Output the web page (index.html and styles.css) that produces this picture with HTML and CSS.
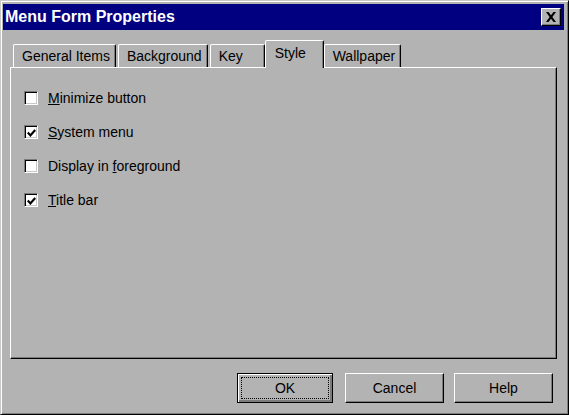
FILE: index.html
```html
<!DOCTYPE html>
<html>
<head>
    <link rel="stylesheet" href="styles.css">
</head>
<body>
    <div class="window">
        <div class="titlebar">
            <span class="title">Menu Form Properties</span>
            <span class="closebtn">
                <svg width="12" height="10" viewBox="0 0 12 10">
                    <path d="M1 0h2.5l2.5 3.2 2.5-3.2h2.5l-3.6 5 3.6 5h-2.5l-2.5-3.2-2.5 3.2h-2.5l3.6-5z" fill="#000"/>
                </svg>
            </span>
        </div>

        <div class="tabs">
            <span class="tab">General Items</span>
            <span class="tab">Background</span>
            <span class="tab">Key</span>
            <span class="tab active">Style</span>
            <span class="tab">Wallpaper</span>
        </div>

        <div class="panel">
            <label class="check"><span class="box"></span><span><u>M</u>inimize button</span></label>
            <label class="check">
                <span class="box"><svg width="9" height="8" viewBox="0 0 9 8"><path d="M0.8 3.6l2.6 2.8 4.8-5.4" stroke="#000" stroke-width="2.2" fill="none"/></svg></span>
                <span><u>S</u>ystem menu</span>
            </label>
            <label class="check"><span class="box"></span><span>Display in <u>f</u>oreground</span></label>
            <label class="check">
                <span class="box"><svg width="9" height="8" viewBox="0 0 9 8"><path d="M0.8 3.6l2.6 2.8 4.8-5.4" stroke="#000" stroke-width="2.2" fill="none"/></svg></span>
                <span><u>T</u>itle bar</span>
            </label>
        </div>

        <div class="buttons">
            <button class="btn default"><span class="focus">OK</span></button>
            <button class="btn">Cancel</button>
            <button class="btn">Help</button>
        </div>
    </div>
</body>
</html>
```

FILE: styles.css
```css
body {
    margin: 0;
    font-family: "Liberation Sans", Arial, sans-serif;
    font-size: 14px;
    color: #000;
}
.window {
    width: 569px;
    height: 415px;
    box-sizing: border-box;
    background: #b3b3b3;
    border: 1px solid;
    border-color: #c8c8c8 #000 #000 #c8c8c8;
    padding: 2px;
    box-shadow: inset 1px 1px #fff, inset -1px -1px #7b7b7b;
    display: flex;
    flex-direction: column;
}
.titlebar {
    height: 25px;
    margin: 1px 2px 0 0;
    background: #000080;
    display: flex;
    align-items: center;
    justify-content: space-between;
    padding: 0 3px 1px 2px;
}
.title {
    color: #fff;
    font-weight: bold;
    font-size: 16px;
}
.closebtn {
    width: 20px;
    height: 18px;
    box-sizing: border-box;
    background: #b3b3b3;
    border: 1px solid;
    border-color: #fff #000 #000 #fff;
    box-shadow: inset -1px -1px #7b7b7b;
    display: flex;
    align-items: center;
    justify-content: center;
}
.tabs {
    display: flex;
    align-items: flex-end;
    height: 27px;
    margin-top: 10px;
    padding-left: 10px;
    position: relative;
    z-index: 1;
}
.tab {
    min-width: 55px;
    height: 23px;
    box-sizing: border-box;
    padding: 3px 5px 0 8px;
    margin-right: 2px;
    border: 1px solid;
    border-bottom: none;
    border-color: #fff #000 #000 #fff;
    border-radius: 2px 2px 0 0;
    box-shadow: inset -1px 0 #7b7b7b;
}
.tab.active {
    min-width: 59px;
    height: 28px;
    margin: 0 -2px -1px -2px;
    padding: 4px 8px 0 9px;
    background: #b3b3b3;
}
.tab.active + .tab {
    margin-left: 2px;
}
.panel {
    height: 292px;
    margin: 0 9px 0 7px;
    box-sizing: border-box;
    border: 1px solid;
    border-color: #fff #000 #000 #fff;
    box-shadow: inset -1px -1px #7b7b7b;
    padding: 22px 13px 0;
    display: flex;
    flex-direction: column;
    gap: 18px;
}
.check {
    display: flex;
    align-items: center;
    gap: 10px;
    height: 16px;
}
.box {
    width: 14px;
    height: 14px;
    box-sizing: border-box;
    background: #fff;
    border: 1px solid;
    border-color: #7b7b7b #fff #fff #7b7b7b;
    box-shadow: inset 1px 1px #000, inset -1px -1px #c8c8c8;
    display: flex;
    align-items: center;
    justify-content: center;
    padding: 1px 0 0 1px;
}
.buttons {
    display: flex;
    justify-content: flex-end;
    gap: 10px;
    margin: 14px 13px 0 0;
}
.btn {
    width: 99px;
    height: 30px;
    box-sizing: border-box;
    font-family: inherit;
    font-size: 14px;
    color: #000;
    background: #b3b3b3;
    border: 1px solid;
    border-color: #fff #000 #000 #fff;
    box-shadow: inset -1px -1px #7b7b7b;
    padding: 0;
}
.btn.default {
    width: 96px;
    margin-right: 2px;
    border: 1px solid #000;
    box-shadow: inset 1px 1px #fff, inset -2px -2px #7b7b7b;
    padding: 3px;
}
.focus {
    display: block;
    height: 100%;
    box-sizing: border-box;
    border: 1px dotted #000;
    line-height: 20px;
}
```
